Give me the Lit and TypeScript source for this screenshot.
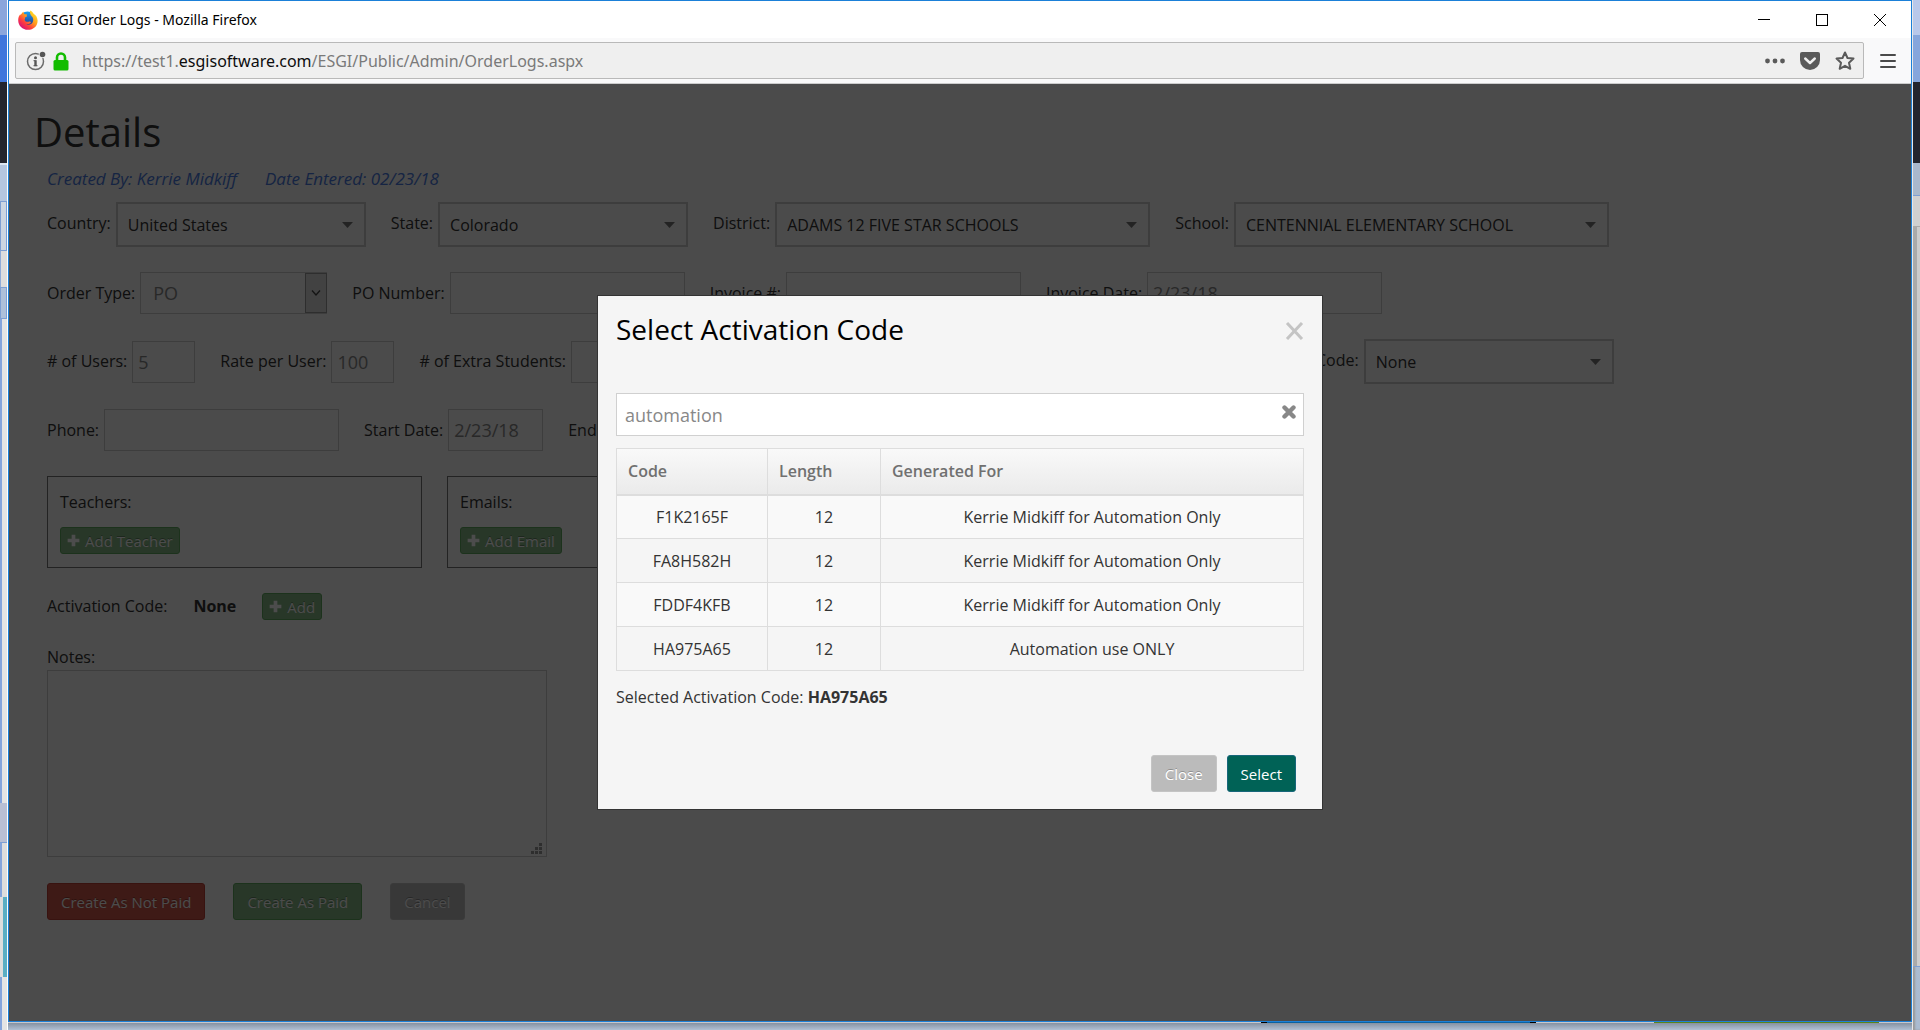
import { LitElement, html, css, svg } from "lit";
import { customElement, state } from "lit/decorators.js";

interface ActivationCode {
  code: string;
  length: number;
  generatedFor: string;
}

const CODES: ActivationCode[] = [
  { code: "F1K2165F", length: 12, generatedFor: "Kerrie Midkiff for Automation Only" },
  { code: "FA8H582H", length: 12, generatedFor: "Kerrie Midkiff for Automation Only" },
  { code: "FDDF4KFB", length: 12, generatedFor: "Kerrie Midkiff for Automation Only" },
  { code: "HA975A65", length: 12, generatedFor: "Automation use ONLY" },
];

const plus = html`<svg class="plus" viewBox="0 0 12 12" aria-hidden="true">
  ${svg`<path d="M4.3 0.6h3.4v3.7h3.7v3.4H7.7v3.7H4.3V7.7H0.6V4.3h3.7z" fill="currentColor"></path>`}
</svg>`;

/* Title bar and address bar of the browser window */
@customElement("browser-chrome")
export class BrowserChrome extends LitElement {
  static styles = css`
    :host { display: block; font-family: "Noto Sans", "Open Sans", sans-serif; }
    button { border: 0; padding: 0; background: none; display: flex; align-items: center; justify-content: center; }
    svg { display: block; }
    .titlebar { display: flex; align-items: center; height: 37px; background: #fff; padding: 0 2px 0 9px; }
    .title { flex: 1; margin-left: 5px; font-size: 14px; line-height: 20px; color: #000; }
    .caption { width: 58px; height: 37px; }
    .toolbar {
      display: flex; align-items: center; box-sizing: border-box; height: 46px;
      padding: 0 0 0 6px; background: #f9f9fa; border-bottom: 1px solid #ccc;
    }
    .urlbar {
      flex: 1; display: flex; align-items: center; box-sizing: border-box; height: 37px;
      padding: 1px 1px 0 10px; border: 1px solid #b9b9b9; border-radius: 2px; background: #efefef;
    }
    .url { flex: 1; margin-left: 13px; font-size: 16px; line-height: 24px; color: #7a7a7a; text-decoration: none; }
    .host { color: #0c0c0d; }
    .lock { margin-left: 7px; }
    .tool { width: 35px; height: 35px; }
    .menu { width: 47px; height: 37px; }
  `;

  render() {
    return html`
      <div class="titlebar">
        <svg width="20" height="20" viewBox="0 0 20 20" aria-hidden="true">
          <defs>
            <linearGradient id="fox" x1="0.85" y1="0.1" x2="0.15" y2="0.9">
              <stop offset="0" stop-color="#ffe226"></stop>
              <stop offset="0.4" stop-color="#ff9a1f"></stop>
              <stop offset="0.7" stop-color="#ff3d3d"></stop>
              <stop offset="1" stop-color="#d6107a"></stop>
            </linearGradient>
            <linearGradient id="globe" x1="0" y1="0" x2="0" y2="1">
              <stop offset="0" stop-color="#16a3f5"></stop>
              <stop offset="1" stop-color="#2a2c81"></stop>
            </linearGradient>
          </defs>
          <circle cx="9.500" cy="9" r="7.600" fill="url(#globe)"></circle>
          <path fill="url(#fox)" d="M12.2 0.4c2 1 3 2.300 3.600 3.700 1.900 0.900 3.600 3.300 3.800 6.300C19.800 15.900 15.400 19.800 10 19.800 4.500 19.800 0.200 15.600 0.200 10.200c0-2.600 0.700-4.500 2.200-6.300 0 0.500 0.100 1 0.300 1.400C3.400 3.700 4.300 2.500 5.600 1.800 5.500 2.900 5.900 3.700 6.600 4.300c0.800-0.100 1.600 0 2.300 0.300L8.700 6.700 6.900 7.600c0.300 1 0.100 1.600-0.300 2.300 0.600 1.700 2.200 2.300 4 1.800 1.200-0.400 2.200-0.200 2.400 0.600-0.900 1.700-3 2.300-4.700 2 2.200 1.300 5.400 0.300 6.500-2.200 1-2.400 0.300-4.600-1.100-5.800C12.600 5 11.300 2.700 12.200 0.400z"></path>
        </svg>
        <span class="title">ESGI Order Logs - Mozilla Firefox</span>
        <button class="caption" aria-label="Minimize">
          <svg width="12" height="12"><path d="M0 5.500h12" stroke="#000"></path></svg>
        </button>
        <button class="caption" aria-label="Maximize">
          <svg width="12" height="12"><rect x="0.500" y="0.500" width="11" height="11" fill="none" stroke="#000"></rect></svg>
        </button>
        <button class="caption" aria-label="Close window">
          <svg width="12" height="12"><path d="M0 0l12 12M12 0L0 12" stroke="#000"></path></svg>
        </button>
      </div>
      <div class="toolbar">
        <div class="urlbar">
          <svg width="20" height="20" viewBox="0 0 20 20" aria-hidden="true">
            <circle cx="9.500" cy="10.500" r="8" fill="none" stroke="#6b6b6b" stroke-width="1.500"></circle>
            <circle cx="16.500" cy="3.500" r="3.800" fill="#efefef"></circle>
            <circle cx="16.500" cy="3.500" r="2.800" fill="#555"></circle>
            <circle cx="9.500" cy="6.700" r="1.500" fill="#555"></circle>
            <path d="M9.500 9.200v6" fill="none" stroke="#555" stroke-width="2.400"></path>
            <path d="M7.500 9.700h2M7.500 14.700h4" fill="none" stroke="#555" stroke-width="1"></path>
          </svg>
          <svg class="lock" width="16" height="19" viewBox="0 0 16 19" aria-hidden="true">
            <path d="M4 9V5.500a4 4 0 0 1 8 0V9" fill="none" stroke="#12bc00" stroke-width="2.600"></path>
            <rect x="0.500" y="8" width="15" height="10.500" rx="1.500" fill="#12bc00"></rect>
          </svg>
          <a class="url" href="#">https://test1.<span class="host">esgisoftware.com</span>/ESGI/Public/Admin/OrderLogs.aspx</a>
          <button class="tool" aria-label="Page actions">
            <svg width="20" height="6" fill="#5a5a5a"><circle cx="2.500" cy="3" r="2.400"></circle><circle cx="10" cy="3" r="2.400"></circle><circle cx="17.500" cy="3" r="2.400"></circle></svg>
          </button>
          <button class="tool" aria-label="Save to Pocket">
            <svg width="20" height="18" viewBox="0 0 20 18">
              <path d="M2 0h16a2 2 0 0 1 2 2v6a10 10 0 0 1-20 0V2a2 2 0 0 1 2-2z" fill="#5a5a5a"></path>
              <path d="M5.200 6.500L10 11l4.800-4.500" fill="none" stroke="#efefef" stroke-width="2.400" stroke-linecap="round" stroke-linejoin="round"></path>
            </svg>
          </button>
          <button class="tool" aria-label="Bookmark this page">
            <svg width="20" height="20" viewBox="0 0 20 20"><path d="M10 1.500l2.500 5.500 6 0.600-4.500 4.100 1.300 6.100L10 14.800l-5.300 3 1.300-6.100L1.500 7.600l6-0.600z" fill="none" stroke="#5a5a5a" stroke-width="2" stroke-linejoin="round"></path></svg>
          </button>
        </div>
        <button class="menu" aria-label="Open menu">
          <svg width="16" height="16"><path d="M1 2h14M1 8h14M1 14h14" stroke="#4a4a4a" stroke-width="2" stroke-linecap="round"></path></svg>
        </button>
      </div>
    `;
  }
}

/* Form of the order that lies under the dialog */
@customElement("order-form")
export class OrderForm extends LitElement {
  static styles = css`
    :host { display: block; font-family: "Open Sans", "Noto Sans", sans-serif; font-size: 16px; line-height: 25px; color: #333; }
    * { box-sizing: border-box; }
    h1 { margin: 0 0 2px; font-size: 40px; line-height: 52px; font-weight: 400; }
    .page { padding: 22px 25px; }
    .meta { display: flex; gap: 28px; padding: 6px 13px 0; font-size: 17px; font-style: italic; color: #4a7ae0; }
    .form { display: flex; flex-direction: column; align-items: flex-start; gap: 25px; padding: 11px 13px; }
    .row { display: flex; align-items: center; gap: 25px; white-space: nowrap; }
    .field { display: flex; align-items: center; gap: 5px; flex: none; }
    .raised { padding-bottom: 3px; }
    .gap { flex: none; width: 632px; }
    input, select, textarea, button { font-family: inherit; margin: 0; }
    .text { height: 42px; padding: 0 5px; border: 1px solid #ccc; background: transparent; font-size: 18px; color: #888; border-radius: 0; }
    .wide { width: 235px; }
    .date { width: 95px; }
    .tiny { width: 63px; }
    .combo { position: relative; display: flex; }
    .combo select { appearance: none; border: 2px solid #ccc; background: transparent; height: 45px; width: 250px; padding: 0 36px 0 10px; font-size: 16px; color: #333; border-radius: 0; }
    .combo .large { width: 375px; }
    .caret { position: absolute; right: 13px; top: 20px; pointer-events: none; }
    .combo .native { border: 1px solid #ccc; height: 42px; width: 187px; font-size: 18px; color: #888; padding: 0 12px; }
    .drop { position: absolute; right: 0; top: 1px; width: 22px; height: 40px; border: 1px solid #999; background: #dcdcdc; pointer-events: none; }
    .panel { display: flex; flex-direction: column; align-items: flex-start; gap: 12px; flex: none; width: 375px; height: 92px; padding: 13px 12px; border: 1px solid #777; }
    .btn { display: inline-flex; align-items: center; height: 37px; padding: 0 13px; border: 1px solid; border-radius: 3px; font-size: 15px; color: #fff; text-shadow: 0 -1px 0 rgba(0, 0, 0, 0.3); }
    .small { height: 27px; padding: 0 6px; gap: 5px; }
    .green { background: #88b888; border-color: #5ea85e; }
    .red { background: #d0584a; border-color: #bd4038; }
    .grey { background: #bbb; border-color: #c4c4c4; }
    .plus { width: 13px; height: 13px; }
    .value { margin: 0 1px; }
    .notes { display: flex; flex-direction: column; }
    textarea { width: 500px; height: 187px; border: 1px solid #ccc; background: transparent; resize: none; display: block; }
    .notebox { position: relative; }
    .grip { position: absolute; right: 4px; bottom: 3px; }
    .actions { display: flex; gap: 28px; padding-top: 1px; }
  `;

  private combo(id: string, label: string, value: string, size = "") {
    return html`<div class="field">
      <label class="raised" for=${id}>${label}</label>
      <div class="combo">
        <select id=${id} class=${size}><option>${value}</option></select>
        <svg class="caret" width="11" height="6"><path d="M0 0h11L5.500 6z" fill="#777"></path></svg>
      </div>
    </div>`;
  }

  private input(id: string, label: string, value: string, size: string) {
    return html`<div class="field">
      <label for=${id}>${label}</label>
      <input id=${id} class="text ${size}" type="text" .value=${value} />
    </div>`;
  }

  render() {
    return html`<div class="page">
      <h1>Details</h1>
      <div class="meta"><span>Created By: Kerrie Midkiff</span><span>Date Entered: 02/23/18</span></div>
      <div class="form">
        <div class="row">
          ${this.combo("country", "Country:", "United States")}
          ${this.combo("state", "State:", "Colorado")}
          ${this.combo("district", "District:", "ADAMS 12 FIVE STAR SCHOOLS", "large")}
          ${this.combo("school", "School:", "CENTENNIAL ELEMENTARY SCHOOL", "large")}
        </div>
        <div class="row">
          <div class="field">
            <label for="type">Order Type:</label>
            <div class="combo">
              <select id="type" class="native"><option>PO</option></select>
              <svg class="drop" viewBox="0 0 20 38"><path d="M6 16.500l4 4.500 4-4.500" fill="none" stroke="#444" stroke-width="1.300"></path></svg>
            </div>
          </div>
          ${this.input("po", "PO Number:", "", "wide")}
          ${this.input("invoice", "Invoice #:", "", "wide")}
          ${this.input("invoice-date", "Invoice Date:", "2/23/18", "wide")}
        </div>
        <div class="row">
          ${this.input("users", "# of Users:", "5", "tiny")}
          ${this.input("rate", "Rate per User:", "100", "tiny")}
          ${this.input("extra", "# of Extra Students:", "", "tiny")}
          <span class="gap"></span>
          ${this.combo("code", "Code:", "None")}
        </div>
        <div class="row">
          ${this.input("phone", "Phone:", "", "wide")}
          ${this.input("start", "Start Date:", "2/23/18", "date")}
          ${this.input("end", "End Date:", "", "date")}
        </div>
        <div class="row">
          <div class="panel"><span>Teachers:</span><button class="btn small green">${plus}Add Teacher</button></div>
          <div class="panel"><span>Emails:</span><button class="btn small green">${plus}Add Email</button></div>
        </div>
        <div class="row">
          <span>Activation Code:</span><b class="value">None</b><button class="btn small green">${plus}Add</button>
        </div>
        <div class="notes">
          <label for="notes">Notes:</label>
          <div class="notebox">
            <textarea id="notes"></textarea>
            <svg class="grip" width="12" height="11" fill="#999"><path d="M8 0h3v3H8zM4 4h3v3H4zM8 4h3v3H8zM0 8h3v3H0zM4 8h3v3H4zM8 8h3v3H8z"></path></svg>
          </div>
        </div>
        <div class="actions">
          <button class="btn red">Create As Not Paid</button>
          <button class="btn green">Create As Paid</button>
          <button class="btn grey">Cancel</button>
        </div>
      </div>
    </div>`;
  }
}

/* Dialog in which an activation code is searched for and picked */
@customElement("code-dialog")
export class CodeDialog extends LitElement {
  @state() private selected = "HA975A65";

  static styles = css`
    :host { display: block; font-family: "Open Sans", "Noto Sans", sans-serif; font-size: 16px; line-height: 24px; color: #333; }
    * { box-sizing: border-box; }
    .dialog { width: 726px; padding: 13px 18px 17px; background: #f5f5f5; border: 1px solid #333; }
    .head { display: flex; justify-content: space-between; align-items: center; }
    h2 { margin: 0; font-size: 28px; line-height: 40px; font-weight: 400; color: #000; }
    button { margin: 0; font-family: inherit; }
    .dismiss { border: 0; padding: 0; background: none; display: flex; margin-top: 4px; }
    .search { position: relative; display: flex; margin-top: 44px; }
    .query { width: 100%; height: 43px; padding: 0 36px 0 8px; border: 1px solid #d0d0d0; background: #fff; font-family: inherit; font-size: 18px; color: #888; border-radius: 0; }
    .clear { position: absolute; right: 8px; top: 12px; border: 0; padding: 0; background: none; display: flex; }
    table { width: 100%; margin-top: 12px; border-collapse: collapse; table-layout: fixed; background: #f5f5f5; }
    .c1 { width: 151px; }
    .c2 { width: 113px; }
    th { height: 46px; padding: 0 11px; text-align: left; font-weight: 600; color: #707070; border: 1px solid #ddd; border-bottom: 2px solid #ddd; }
    thead { background: linear-gradient(#f9f9f9, #eaeaea); }
    td { height: 44px; padding: 0; text-align: center; border: 1px solid #ddd; }
    .row:nth-child(odd) { background: #f9f9f9; }
    .picked { margin: 14px 0 0; }
    .foot { display: flex; justify-content: flex-end; gap: 10px; padding: 46px 8px 0 0; }
    .btn { height: 37px; padding: 0 13px; border: 1px solid; border-radius: 3px; font-size: 15px; color: #fff; }
    .close { background: #bbb; border-color: #c4c4c4; text-shadow: 0 -1px 0 rgba(0, 0, 0, 0.25); }
    .select { background: #006256; border-color: #17667a; }
  `;

  render() {
    return html`<div class="dialog" role="dialog" aria-labelledby="heading">
      <div class="head">
        <h2 id="heading">Select Activation Code</h2>
        <button class="dismiss" aria-label="Close dialog">
          <svg width="19" height="18"><path d="M2 1l15 16M17 1L2 17" stroke="#c4c4c4" stroke-width="3"></path></svg>
        </button>
      </div>
      <div class="search">
        <input class="query" type="text" aria-label="Search codes" .value=${"automation"} />
        <button class="clear" aria-label="Clear search">
          <svg width="14" height="14"><path d="M2.500 2.500l9 9M11.500 2.500l-9 9" stroke="#888" stroke-width="4.400" stroke-linecap="round"></path></svg>
        </button>
      </div>
      <table>
        <colgroup><col class="c1" /><col class="c2" /><col /></colgroup>
        <thead><tr><th>Code</th><th>Length</th><th>Generated For</th></tr></thead>
        <tbody>
          ${CODES.map((c) => html`<tr class="row" @click=${() => (this.selected = c.code)}>
            <td>${c.code}</td><td>${c.length}</td><td>${c.generatedFor}</td>
          </tr>`)}
        </tbody>
      </table>
      <p class="picked">Selected Activation Code: <b>${this.selected}</b></p>
      <div class="foot"><button class="btn close">Close</button><button class="btn select">Select</button></div>
    </div>`;
  }
}

@customElement("app-root")
export class AppRoot extends LitElement {
  static styles = css`
    :host { display: block; }
    * { box-sizing: border-box; }
    .desktop { display: flex; height: 100vh; overflow: hidden; background: linear-gradient(#b5c6dc, #aabbd0); }
    .edge { flex: none; width: 8px; display: flex; flex-direction: column; border-right: 1px solid #fff; box-shadow: inset -2px 0 2px #999; }
    .right { width: 8px; border-right: 0; border-left: 1px solid #e8e8e8; box-shadow: inset 2px 0 2px #999; }
    .s1 { height: 35px; background: #8ba6dc; }
    .s2 { height: 47px; background: #3f76dc; }
    .s3 { height: 81px; background: #23252e; }
    .s4 { height: 38px; background: #b4c6e0; border-top: 2px solid #dce6f2; }
    .s5 { height: 50px; background: #ccd6e2; border: 1px solid #7d9fd4; }
    .s6 { height: 36px; background: #ddd; border-left: 1px solid #8fabd8; }
    .s7 { height: 32px; background: #adc0da; border: 1px solid #7d9fd4; }
    .s8 { height: 484px; background: #e4e4e4; border-left: 2px solid #84a4dc; }
    .s9 { height: 40px; background: #b8bfd4; border-bottom: 1px solid #7d9fd4; }
    .s10 { height: 54px; background: #ddd; border-left: 2px solid #84a4dc; }
    .s11 { height: 80px; background: #5aaec4; border-left: 3px solid #ddd; }
    .s12 { flex: 1; background: #e4e4e4; border-left: 2px solid #84a4dc; }
    .r1 { height: 35px; background: #b8c8ea; }
    .r2 { height: 47px; background: #86a6dc; }
    .r4 { height: 33px; background: #a9b8cc; border-bottom: 1px solid #7d9fd4; }
    .r5 { height: 31px; background: #d0d0d0; border-bottom: 1px solid #aaa; }
    .r6 { height: 740px; background: linear-gradient(90deg, #aaa 0 4px, #ccc 4px); border-bottom: 1px solid #7d9fd4; }
    .main { flex: 1; min-width: 0; display: flex; flex-direction: column; }
    .window { flex: 1; min-height: 0; display: flex; flex-direction: column; border: 1px solid #1b80d8; }
    .content { flex: 1; position: relative; background: #fafafa; }
    .overlay { position: absolute; inset: 0; display: flex; align-items: center; justify-content: center; background: rgba(0, 0, 0, 0.7); }
    .under { flex: none; height: 8px; display: flex; flex-direction: column; background: linear-gradient(#7f8a99, #b0c0d4); }
    .strip { display: flex; height: 1px; background: #c8c8cc; justify-content: flex-end; }
    .blue { width: 275px; background: #0b62a0; border: solid #000; border-width: 0 6px; margin-right: 118px; }
    .green { width: 225px; background: #5a8518; margin-right: 33px; }
  `;

  render() {
    return html`<div class="desktop">
      <div class="edge">${[1, 2, 3, 4, 5, 6, 7, 8, 9, 10, 11, 12].map((n) => html`<i class="s${n}"></i>`)}</div>
      <div class="main">
        <div class="window">
          <browser-chrome></browser-chrome>
          <div class="content">
            <order-form></order-form>
            <div class="overlay"><code-dialog></code-dialog></div>
          </div>
        </div>
        <div class="under"><div class="strip"><i class="blue"></i><i class="green"></i></div></div>
      </div>
      <div class="edge right"><i class="r1"></i><i class="r2"></i><i class="s3"></i><i class="r4"></i><i class="r5"></i><i class="r6"></i></div>
    </div>`;
  }
}
